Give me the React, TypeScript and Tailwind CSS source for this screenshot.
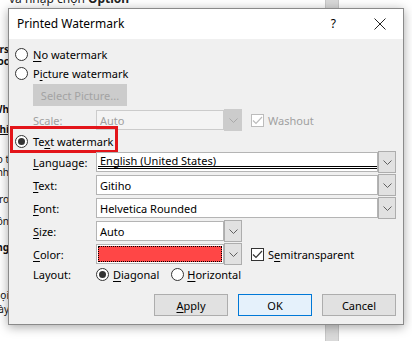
import React from 'react';

const ui = "font-['Segoe_UI','Noto_Sans',sans-serif] text-[11px] leading-none";

function Chevron({ color = '#606060' }: { color?: string }) {
  return (
    <svg width="9" height="5" viewBox="0 0 9 5" fill="none">
      <path d="M0.5 0.5 L4.5 4.5 L8.5 0.5" stroke={color} strokeWidth="1" />
    </svg>
  );
}

function Radio({ checked = false }: { checked?: boolean }) {
  return (
    <span className="flex h-[13px] w-[13px] shrink-0 items-center justify-center rounded-full border border-[#333] bg-white">
      {checked && <span className="h-[7px] w-[7px] rounded-full bg-[#333]" />}
    </span>
  );
}

function Check({ disabled = false }: { disabled?: boolean }) {
  const c = disabled ? '#bcbcbc' : '#333';
  return (
    <span
      className={`flex h-[13px] w-[13px] shrink-0 items-center justify-center border bg-white ${
        disabled ? 'border-[#bcbcbc]' : 'border-[#333]'
      }`}
    >
      <svg width="11" height="9" viewBox="0 0 11 9" fill="none">
        <path d="M1 4.5 L4 7.5 L10 1" stroke={c} strokeWidth="1.2" />
      </svg>
    </span>
  );
}

// mnemonic letter
function U({ children }: { children: React.ReactNode }) {
  return <span className="underline decoration-1 underline-offset-2">{children}</span>;
}

function Combo({
  children,
  wide = false,
  disabled = false,
}: {
  children?: React.ReactNode;
  wide?: boolean;
  disabled?: boolean;
}) {
  return (
    <div className={`flex h-[20px] ${wide ? 'w-[300px]' : 'w-[146px]'}`}>
      <div
        className={`relative flex flex-1 items-center border px-[3px] ${
          disabled ? 'border-[#cccccc] bg-[#f4f4f4] text-[#a0a0a0]' : 'border-[#b4b4b4] bg-white'
        }`}
      >
        {children}
      </div>
      <div
        className={`-my-[1px] flex w-[18px] items-center justify-center border ${
          disabled ? 'border-[#cccccc] bg-[#cccccc]' : 'border-[#adadad] bg-[#e1e1e1]'
        }`}
      >
        <Chevron color={disabled ? '#a8a8a8' : '#606060'} />
      </div>
    </div>
  );
}

function Row({ label, children, gray = false }: { label: React.ReactNode; children: React.ReactNode; gray?: boolean }) {
  return (
    <div className="flex h-[20px] items-center pl-[18px]">
      <div className={`w-[63px] ${gray ? 'text-[#a0a0a0]' : ''}`}>{label}</div>
      {children}
    </div>
  );
}

function Btn({ children, primary = false }: { children: React.ReactNode; primary?: boolean }) {
  return (
    <div
      className={`flex h-[22px] w-[74px] items-center justify-center border ${
        primary ? 'border-[#0078d7] bg-[#e5f1fb]' : 'border-[#adadad] bg-[#e1e1e1]'
      }`}
    >
      {children}
    </div>
  );
}

const sideText: { top: number; text: string; bold?: boolean; under?: boolean }[] = [
  { top: 44, text: 'Users', bold: true },
  { top: 56, text: 'Thoc', bold: true },
  { top: 104, text: 'Wh', bold: true },
  { top: 124, text: 'Chi', bold: true, under: true },
  { top: 154, text: 'Vào t' },
  { top: 167, text: 'Chỉnh' },
  { top: 194, text: 'Nhấp ro' },
  { top: 216, text: 'thôn' },
  { top: 242, text: 'Bảng', bold: true },
  { top: 290, text: 'gọi' },
  { top: 304, text: 'này' },
];

export default function App() {
  return (
    <div className={`relative h-[341px] w-[412px] overflow-hidden bg-white ${ui} text-black`}>
      {/* document behind the dialog */}
      <div className="absolute left-[325px] top-0 h-full w-[14px] border-x border-[#c8c8c8] bg-[#d9d9d9]" />
      <div className="absolute left-[9px] top-[-7px] whitespace-nowrap text-[12px] text-[#222]">
        và nhập chọn <b>Option</b>
      </div>
      <div className="absolute left-0 top-0 h-full w-[9px] overflow-hidden">
        {sideText.map((t) => (
          <div
            key={t.top}
            className={`absolute right-0 whitespace-nowrap text-[10px] text-[#111] ${t.bold ? 'font-bold' : ''} ${
              t.under ? 'underline' : ''
            }`}
            style={{ top: t.top }}
          >
            {t.text}
          </div>
        ))}
      </div>

      {/* dialog */}
      <div className="absolute left-[8px] top-[8px] flex h-[317px] w-[396px] flex-col border border-[#8a8a8a] bg-[#f0f0f0] shadow-[0_2px_10px_rgba(0,0,0,0.35)]">
        <div className="flex h-[30px] items-center bg-white pl-[8px]">
          <span className="text-[12px]">Printed Watermark</span>
          <span className="ml-auto mr-[38px] text-[12px]">?</span>
          <svg width="12" height="12" viewBox="0 0 12 12" className="mr-[17px]">
            <path d="M0.5 0.5 L11.5 11.5 M11.5 0.5 L0.5 11.5" stroke="#222" strokeWidth="1" />
          </svg>
        </div>

        <div className="flex flex-1 flex-col pl-[6px] pt-[6px]">
          <div className="flex h-[19px] items-center gap-[5px]">
            <Radio />
            <span>
              <U>N</U>o watermark
            </span>
          </div>
          <div className="flex h-[19px] items-center gap-[5px]">
            <Radio />
            <span>
              P<U>i</U>cture watermark
            </span>
          </div>
          <div className="ml-[18px] mt-[1px] flex h-[22px] w-[94px] items-center justify-center bg-[#cccccc] text-[#a3a3a3]">
            Select Picture...
          </div>
          <div className="mt-[4px]">
            <Row label="Scale:" gray>
              <Combo disabled>Auto</Combo>
              <div className="ml-[9px] flex items-center gap-[4px] text-[#a0a0a0]">
                <Check disabled />
                Washout
              </div>
            </Row>
          </div>

          <div className="relative flex h-[22px] items-center gap-[5px]">
            <Radio checked />
            <span>
              Te<U>x</U>t watermark
            </span>
            <div className="absolute left-[-5px] top-[-4px] h-[27px] w-[108px] border-[3px] border-[#e3151a]" />
          </div>

          <Row
            label={
              <>
                <U>L</U>anguage:
              </>
            }
          >
            <Combo wide>
              <span className="-mt-[3px]">English (United States)</span>
              <div className="absolute bottom-[2px] left-[1px] right-0 h-[3px] border-y border-black" />
            </Combo>
          </Row>
          <div className="mt-[3px]">
            <Row
              label={
                <>
                  <U>T</U>ext:
                </>
              }
            >
              <Combo wide>Gitiho</Combo>
            </Row>
          </div>
          <div className="mt-[3px]">
            <Row
              label={
                <>
                  <U>F</U>ont:
                </>
              }
            >
              <Combo wide>Helvetica Rounded</Combo>
            </Row>
          </div>
          <div className="mt-[3px]">
            <Row
              label={
                <>
                  <U>S</U>ize:
                </>
              }
            >
              <Combo>Auto</Combo>
            </Row>
          </div>
          <div className="mt-[3px]">
            <Row
              label={
                <>
                  <U>C</U>olor:
                </>
              }
            >
              <div className="flex h-[20px] w-[146px]">
                <div className="flex flex-1 border border-[#b4b4b4] bg-white p-[1px]">
                  <div className="flex-1 border border-dotted border-black bg-[#ff4646]" />
                </div>
                <div className="-my-[1px] flex w-[18px] items-center justify-center border border-[#adadad] bg-[#e1e1e1]">
                  <Chevron />
                </div>
              </div>
              <div className="ml-[9px] flex items-center gap-[4px]">
                <Check />
                <span>
                  S<U>e</U>mitransparent
                </span>
              </div>
            </Row>
          </div>
          <Row label="Layout:">
            <div className="flex items-center gap-[4px]">
              <Radio checked />
              <span>
                <U>D</U>iagonal
              </span>
            </div>
            <div className="ml-[12px] flex items-center gap-[3px]">
              <Radio />
              <span>
                <U>H</U>orizontal
              </span>
            </div>
          </Row>

          <div className="mt-[10px] flex justify-end gap-[10px] pr-[7px]">
            <Btn>
              <span>
                <U>A</U>pply
              </span>
            </Btn>
            <Btn primary>OK</Btn>
            <Btn>Cancel</Btn>
          </div>
        </div>
      </div>
    </div>
  );
}
